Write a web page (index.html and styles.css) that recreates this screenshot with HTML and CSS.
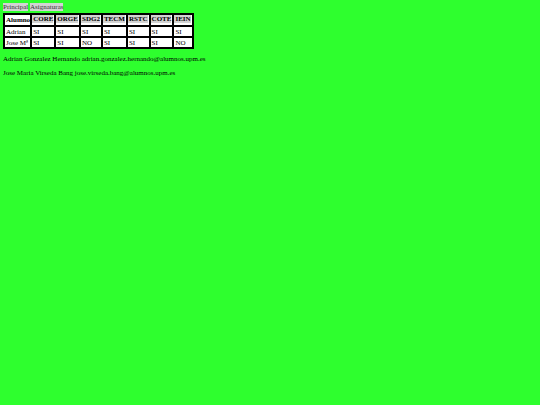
FILE: index.html
```html
<!DOCTYPE html>
<html lang="es">
<head>
    <meta charset="UTF-8">
    <meta name="viewport" content="width=device-width, initial-scale=1.0">
    <title>Asignaturas</title>
    <link rel="stylesheet" href="styles.css">
</head>
<body>
    <nav class="menu">
        <a href="#principal">Principal</a>
        <a href="#asignaturas">Asignaturas</a>
    </nav>
    <table class="asignaturas" id="asignaturas">
        <tr>
            <th class="alumno">Alumno</th>
            <th><a href="#core">CORE</a></th>
            <th><a href="#orge">ORGE</a></th>
            <th><a href="#sdg2">SDG2</a></th>
            <th><a href="#tecm">TECM</a></th>
            <th><a href="#rstc">RSTC</a></th>
            <th><a href="#cote">COTE</a></th>
            <th><a href="#iein">IEIN</a></th>
        </tr>
        <tr>
            <td>Adrian</td>
            <td>SI</td>
            <td>SI</td>
            <td>SI</td>
            <td>SI</td>
            <td>SI</td>
            <td>SI</td>
            <td>SI</td>
        </tr>
        <tr>
            <td>Jose Mª</td>
            <td>SI</td>
            <td>SI</td>
            <td>NO</td>
            <td>SI</td>
            <td>SI</td>
            <td>SI</td>
            <td>NO</td>
        </tr>
    </table>
    <p>Adrian Gonzalez Hernando adrian.gonzalez.hernando@alumnos.upm.es</p>
    <p>Jose Maria Virseda Bang jose.virseda.bang@alumnos.upm.es</p>
</body>
</html>
```

FILE: styles.css
```css
body {
    margin: 3px;
    background: #2eff2e;
    color: #000;
    font-family: "Liberation Serif", "Times New Roman", serif;
    font-size: 7px;
    line-height: 8px;
}
.menu a {
    display: inline-block;
}
a {
    background: #d3d3d3;
    color: #333;
    text-decoration: none;
}
.asignaturas {
    margin-top: 2px;
    background: #000;
    border-spacing: 2px;
}
.asignaturas th,
.asignaturas td {
    height: 9px;
    padding: 0 1px;
    background: #fff;
    text-align: left;
    vertical-align: middle;
}
.asignaturas th {
    height: 10px;
    padding: 0 1px 0 0;
    vertical-align: top;
}
.asignaturas th a {
    display: block;
    padding-left: 1px;
    color: #000;
}
.asignaturas .alumno {
    padding: 0 0 0 1px;
    vertical-align: middle;
}
p {
    margin: 6px 0;
}
```
